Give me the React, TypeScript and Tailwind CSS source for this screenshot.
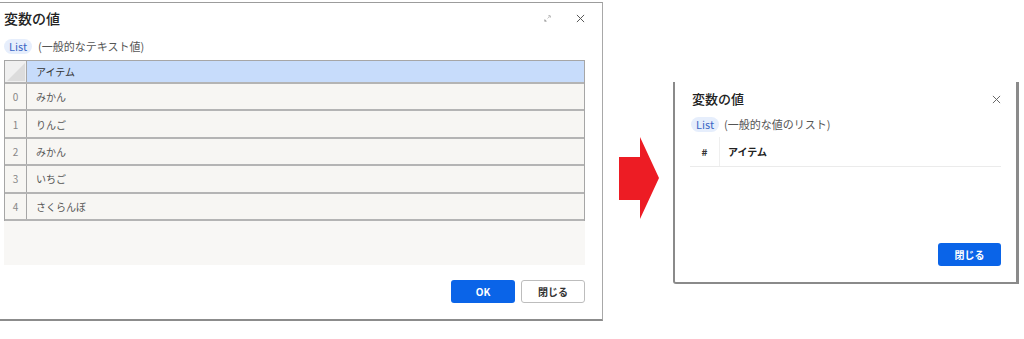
import React from 'react';

const font = { fontFamily: '"Noto Sans CJK JP", "Noto Sans", sans-serif' };

const items = ['みかん', 'りんご', 'みかん', 'いちご', 'さくらんぼ'];

function CloseIcon({ className = '' }: { className?: string }) {
  return (
    <svg viewBox="0 0 10 10" className={className} fill="none" stroke="currentColor" strokeWidth="1.1">
      <path d="M1 1 L9 9 M9 1 L1 9" />
    </svg>
  );
}

function ExpandIcon() {
  return (
    <svg viewBox="0 0 10 10" className="w-[9px] h-[9px] text-[#9a9a9a]" fill="none" stroke="currentColor" strokeWidth="1">
      <path d="M2 8 L8 2" strokeDasharray="1.5 3" />
      <path d="M6 2 H8 V4 M2 6 V8 H4" />
    </svg>
  );
}

function Badge() {
  return (
    <span className="inline-flex items-center h-[15px] px-[5px] rounded-full bg-[#e6eefc] text-[#3b66c4] text-[11px]">
      List
    </span>
  );
}

// old dialog on the left
function OldDialog() {
  return (
    <div className="mt-[2px] w-[603px] h-[319px] shrink-0 bg-white border-t border-t-[#9c9c9c] border-r border-r-[#a8a8a8] border-b-2 border-b-[#8c8c8c] flex flex-col pl-[4px] pr-[17px]">
      <div className="h-[30px] flex items-center">
        <span className="text-[14px] font-medium text-[#222]">変数の値</span>
        <div className="ml-auto flex items-center gap-[24px] pr-[0px]">
          <ExpandIcon />
          <CloseIcon className="w-[9px] h-[9px] text-[#555]" />
        </div>
      </div>
      <div className="h-[27px] flex items-center gap-[6px]">
        <Badge />
        <span className="text-[11px] text-[#555]">(一般的なテキスト値)</span>
      </div>
      <div className="w-[581px] h-[205px] bg-[#f8f7f5] flex flex-col">
        <div className="border-l border-r border-t border-[#a6a6a6]">
          <div className="h-[23px] flex border-b-2 border-b-[#b4b4b4]">
            <div className="w-[22px] bg-[#f0f0f0] border-r border-[#a6a6a6] relative">
              <svg viewBox="0 0 20 20" className="absolute right-[1px] bottom-[1px] w-[18px] h-[18px]">
                <polygon points="20,0 20,20 0,20" fill="#dcdcdc" />
              </svg>
            </div>
            <div className="flex-1 bg-[#c7dcfb] flex items-center pl-[9px] text-[10px] text-[#333]">アイテム</div>
          </div>
          {items.map((it, i) => (
            <div key={i} className="h-[27.4px] flex border-b-2 border-b-[#b4b4b4] bg-[#f7f6f3]">
              <div className="w-[22px] border-r border-[#a6a6a6] flex items-center justify-center text-[10px] text-[#888]">{i}</div>
              <div className="flex-1 flex items-center pl-[9px] text-[10px] text-[#555]">{it}</div>
            </div>
          ))}
        </div>
      </div>
      <div className="flex justify-end gap-[6px] mt-[15px]">
        <button className="w-[64px] h-[23px] rounded-[3px] bg-[#0a64e8] text-white text-[10px] font-bold">OK</button>
        <button className="w-[64px] h-[23px] rounded-[3px] bg-white border border-[#bdbdbd] text-[#333] text-[10px] font-semibold">閉じる</button>
      </div>
    </div>
  );
}

function Arrow() {
  return (
    <svg viewBox="0 0 40 82" className="w-[40px] h-[82px] shrink-0 mt-[137px] ml-[16px]">
      <polygon points="0,20 21,20 21,0 40,41 21,82 21,63 0,63" fill="#ed1c24" />
    </svg>
  );
}

// new dialog on the right
function NewDialog() {
  return (
    <div className="mt-[82px] ml-[14px] w-[346px] h-[202px] shrink-0 bg-white border-l-2 border-l-[#8a8a8a] border-r-[3px] border-r-[#8a8a8a] border-b-2 border-b-[#8a8a8a] rounded-bl-[3px] flex flex-col pl-[15px] pr-[15px] pb-[16px]">
      <div className="h-[34px] flex items-center pl-[2px]">
        <span className="text-[13px] font-medium text-[#222]">変数の値</span>
        <CloseIcon className="ml-auto w-[9px] h-[9px] text-[#666]" />
      </div>
      <div className="h-[17px] flex items-center gap-[5px] pl-[1px]">
        <Badge />
        <span className="text-[11px] text-[#555]">(一般的な値のリスト)</span>
      </div>
      <div className="mt-[4px] h-[30px] flex border-b border-b-[#ebebeb]">
        <div className="w-[30px] border-r border-[#efefef] flex items-center justify-center text-[10px] font-semibold text-[#333]">#</div>
        <div className="flex-1 flex items-center pl-[8px] text-[10px] font-bold text-[#222]">アイテム</div>
      </div>
      <div className="flex-1" />
      <div className="flex justify-end">
        <button className="w-[63px] h-[23px] rounded-[3px] bg-[#0a64e8] text-white text-[10px] font-bold">閉じる</button>
      </div>
    </div>
  );
}

export default function App() {
  return (
    <div className="w-[1024px] h-[339px] bg-white flex items-start overflow-hidden" style={font}>
      <OldDialog />
      <Arrow />
      <NewDialog />
    </div>
  );
}
